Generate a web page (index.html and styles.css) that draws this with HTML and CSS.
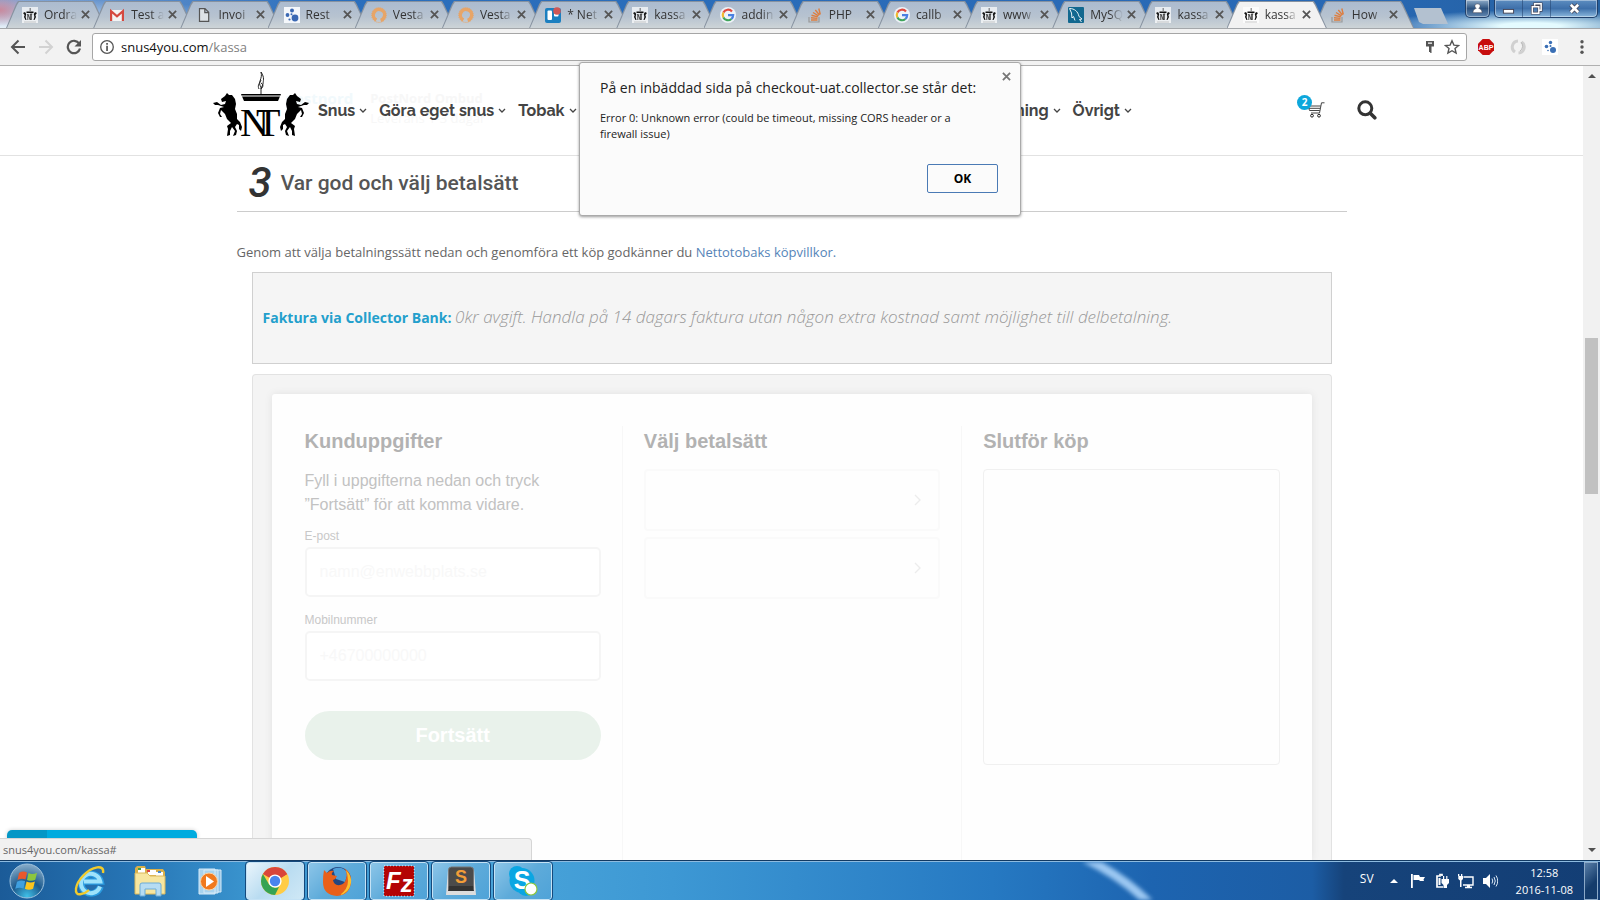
FILE: index.html
```html
<!DOCTYPE html>
<html lang="sv">
<head>
<meta charset="utf-8">
<title>kassa</title>
<link rel="stylesheet" href="styles.css">
</head>
<body>
<svg class="sprite" aria-hidden="true">
  <symbol id="horse" viewBox="0 0 30 44">
    <path d="M0 10 L4 9 L8 12 L12 11 L13 8 L9 9 L8 6 L12 3 L14 0 L16 2 L19 2 L22 6 L23 11 L22 16 L24 21 L24 26 L27 29 L29 34 L28 38 L26 36 L26 32 L24 31 L22 34 L24 38 L23 42 L20 43 L22 38 L19 34 L17 38 L17 42 L14 43 L15 36 L14 33 L18 30 L14 26 L12 21 L8 17 L7 21 L9 24 L7 24 L5 20 L7 15 L11 14 L5 12 L2 12 Z"/>
  </symbol>
  <symbol id="fav-nt" viewBox="0 0 16 16">
    <path fill="#fff" fill-opacity=".7" d="M0 0h16v16H0z"/>
    <path fill="#111" d="M4.500 4.500h7v1.400h-7zM7.800 1h.6v3h-.6zM1 6l2-1 1.200 2-.6 3 .9 3H3.500L2 10l.6-2zM15 6l-2-1-1.200 2 .6 3-.9 3h1l1.500-3-.6-2z"/>
    <path stroke="#222" stroke-width=".8" fill="none" d="M5.800 13V7l2.500 6V7h2M9.300 7v6"/>
    <path stroke="#aaa" stroke-width=".6" d="M2 15h12"/>
  </symbol>
  <symbol id="fav-gmail" viewBox="0 0 16 16">
    <path fill="#f4f4f4" d="M1 3h14v11H1z"/><path fill="none" stroke="#d5493f" stroke-width="2.200" d="M2.100 14V4.200L8 9.300l5.900-5.100V14"/>
  </symbol>
  <symbol id="fav-doc" viewBox="0 0 16 16">
    <path fill="#dde2e6" stroke="#555" stroke-width="1.200" d="M3.500 1.600h5.500l3.700 3.700v9.100H3.500zM8.800 1.800v3.800h3.700"/>
  </symbol>
  <symbol id="fav-rest" viewBox="0 0 16 16">
    <path fill="#f4f7fb" d="M0 0h16v16H0z"/><g fill="#3a68b3"><circle cx="8" cy="3.500" r="2"/><circle cx="3.500" cy="8" r="1.900"/><circle cx="11" cy="11" r="3.400"/><circle cx="5.500" cy="12.500" r="1.100"/><circle cx="7.500" cy="7.300" r="1"/></g>
  </symbol>
  <symbol id="fav-vesta" viewBox="0 0 16 16">
    <circle cx="8" cy="8" r="5.600" fill="none" stroke="#e7a568" stroke-width="3.400" stroke-dasharray="30 5.200" transform="rotate(118 8 8)"/><circle cx="8" cy="8" r="7.400" fill="none" stroke="#e7a568" stroke-dasharray="1 1"/>
  </symbol>
  <symbol id="fav-trello" viewBox="0 0 16 16">
    <rect y="1" width="16" height="15" rx="2" fill="#1b7fc0"/><rect x="2.500" y="3.500" width="4.500" height="9.500" rx="1" fill="#fff"/><rect x="9" y="3.500" width="4.500" height="6" rx="1" fill="#fff"/><circle cx="12" cy="4" r="3.800" fill="#cf5656"/>
  </symbol>
  <symbol id="fav-google" viewBox="0 0 16 16">
    <circle cx="8" cy="8" r="8" fill="#eef3f8"/><g fill="none" stroke-width="2.200"><path stroke="#e04a3f" d="M12 4.500A5.200 5.200 0 0 0 3.400 5.600"/><path stroke="#f0b92d" d="M3.400 5.600a5.200 5.200 0 0 0 0 4.800"/><path stroke="#3fa45b" d="M3.400 10.400a5.200 5.200 0 0 0 8 1.600"/><path stroke="#4a80e0" d="M11.400 12a5.200 5.200 0 0 0 1.800-3.900H8"/></g>
  </symbol>
  <symbol id="fav-stack" viewBox="0 0 16 16">
    <path fill="none" stroke="#999" stroke-width="1.200" d="M2 10v5h10v-5"/><path fill="none" stroke="#dd7d3f" stroke-width="1.400" d="M4 13h6.500M4 10.700l6.500.7M4.500 8.200l6.300 1.700M6 5.500l5.500 3.300M8.300 3l4.200 5M11.800 1.500l1.500 6"/>
  </symbol>
  <symbol id="fav-mysql" viewBox="0 0 16 16">
    <rect width="16" height="16" rx="1" fill="#12688f"/><path fill="none" stroke="#e8f3f7" stroke-width="1" d="M1.500 1.500c5 0 8.500 3 9.500 8l3 2.500-2.500.5 2 2.500M1.500 1.500l2 4.500.5 5 1.500-1.500 1.500 4"/>
  </symbol>
  <symbol id="x" viewBox="0 0 10 10"><path stroke="currentColor" stroke-width="2" d="M1 1l8 8M9 1L1 9"/></symbol>
  <symbol id="chev" viewBox="0 0 8 6"><path fill="none" stroke="currentColor" stroke-width="1.300" d="M1 1l3 3 3-3"/></symbol>
</svg>

<header class="titlebar">
  <nav class="tabs" aria-label="Flikar">
    <div class="tab"><svg class="fav"><use href="#fav-nt"/></svg><span class="tab-name">Ordra</span><button class="tab-x" aria-label="Stäng"><svg><use href="#x"/></svg></button></div>
    <div class="tab"><svg class="fav"><use href="#fav-gmail"/></svg><span class="tab-name">Test a</span><button class="tab-x" aria-label="Stäng"><svg><use href="#x"/></svg></button></div>
    <div class="tab"><svg class="fav"><use href="#fav-doc"/></svg><span class="tab-name">Invoi</span><button class="tab-x" aria-label="Stäng"><svg><use href="#x"/></svg></button></div>
    <div class="tab"><svg class="fav"><use href="#fav-rest"/></svg><span class="tab-name">Rest</span><button class="tab-x" aria-label="Stäng"><svg><use href="#x"/></svg></button></div>
    <div class="tab"><svg class="fav"><use href="#fav-vesta"/></svg><span class="tab-name">Vesta</span><button class="tab-x" aria-label="Stäng"><svg><use href="#x"/></svg></button></div>
    <div class="tab"><svg class="fav"><use href="#fav-vesta"/></svg><span class="tab-name">Vesta</span><button class="tab-x" aria-label="Stäng"><svg><use href="#x"/></svg></button></div>
    <div class="tab"><svg class="fav"><use href="#fav-trello"/></svg><span class="tab-name">* Net</span><button class="tab-x" aria-label="Stäng"><svg><use href="#x"/></svg></button></div>
    <div class="tab"><svg class="fav"><use href="#fav-nt"/></svg><span class="tab-name">kassa</span><button class="tab-x" aria-label="Stäng"><svg><use href="#x"/></svg></button></div>
    <div class="tab"><svg class="fav"><use href="#fav-google"/></svg><span class="tab-name">addin</span><button class="tab-x" aria-label="Stäng"><svg><use href="#x"/></svg></button></div>
    <div class="tab"><svg class="fav"><use href="#fav-stack"/></svg><span class="tab-name">PHP</span><button class="tab-x" aria-label="Stäng"><svg><use href="#x"/></svg></button></div>
    <div class="tab"><svg class="fav"><use href="#fav-google"/></svg><span class="tab-name">callb</span><button class="tab-x" aria-label="Stäng"><svg><use href="#x"/></svg></button></div>
    <div class="tab"><svg class="fav"><use href="#fav-nt"/></svg><span class="tab-name">www</span><button class="tab-x" aria-label="Stäng"><svg><use href="#x"/></svg></button></div>
    <div class="tab"><svg class="fav"><use href="#fav-mysql"/></svg><span class="tab-name">MySQ</span><button class="tab-x" aria-label="Stäng"><svg><use href="#x"/></svg></button></div>
    <div class="tab"><svg class="fav"><use href="#fav-nt"/></svg><span class="tab-name">kassa</span><button class="tab-x" aria-label="Stäng"><svg><use href="#x"/></svg></button></div>
    <div class="tab active"><svg class="fav"><use href="#fav-nt"/></svg><span class="tab-name">kassa</span><button class="tab-x" aria-label="Stäng"><svg><use href="#x"/></svg></button></div>
    <div class="tab"><svg class="fav"><use href="#fav-stack"/></svg><span class="tab-name">How</span><button class="tab-x" aria-label="Stäng"><svg><use href="#x"/></svg></button></div>
  </nav>
  <button class="new-tab" aria-label="Ny flik"></button>
  <button class="user-btn" aria-label="Användare"><svg viewBox="0 0 12 12"><path fill="#fff" stroke="#445" stroke-width=".6" d="M6 1a2.500 2.500 0 0 1 1.300 4.800C9 6.500 11 7.500 11 10.500H1C1 7.500 3 6.500 4.700 5.800A2.500 2.500 0 0 1 6 1z"/></svg></button>
  <div class="win-btns">
    <button aria-label="Minimera"><svg viewBox="0 0 14 14"><rect x="1.500" y="8" width="11" height="4" fill="#fff" stroke="#445"/></svg></button>
    <button aria-label="Återställ"><svg viewBox="0 0 14 14"><path fill="none" stroke="#445" stroke-width="3" d="M5 4V2h7v7h-2M2.500 5h7v7h-7z"/><path fill="none" stroke="#fff" stroke-width="1.600" d="M5 4V2h7v7h-2M2.500 5h7v7h-7z"/></svg></button>
    <button aria-label="Stäng fönster"><svg viewBox="0 0 14 14"><path stroke="#445" stroke-width="4.600" d="M3 3l8 8M11 3l-8 8"/><path stroke="#fff" stroke-width="2.800" d="M3 3l8 8M11 3l-8 8"/></svg></button>
  </div>
</header>

<div class="toolbar">
  <button aria-label="Tillbaka"><svg viewBox="0 0 16 16"><path fill="none" stroke="#555" stroke-width="2" d="M15 8H2.500M8.500 1.500L2 8l6.500 6.500"/></svg></button>
  <button aria-label="Framåt"><svg viewBox="0 0 16 16"><path fill="none" stroke="#d2d2d2" stroke-width="2" d="M1 8h12.500M7.500 1.500L14 8l-6.500 6.500"/></svg></button>
  <button aria-label="Ladda om"><svg viewBox="0 0 16 16"><path fill="none" stroke="#555" stroke-width="2.200" d="M13.200 4.600A6.200 6.200 0 1 0 14 9.500"/><path fill="#555" d="M15 1v6.500H8.500z"/></svg></button>
  <div class="omnibox">
    <svg class="info" viewBox="0 0 16 16"><circle cx="8" cy="8" r="6.300" fill="none" stroke="#555" stroke-width="1.300"/><path fill="#555" d="M7.200 4h1.700v1.700H7.200zM7.200 6.800h1.700V12H7.200z"/></svg>
    <div class="url" role="textbox" aria-label="Adress">snus4you.com<span>/kassa</span></div>
    <svg class="omni-icon" viewBox="0 0 16 16"><path fill="#555" fill-rule="evenodd" d="M4 2h8v5.500h-2.500V14H8.200v-1H7v-5.500H4zM6 3.500v1.300h4V3.500z"/></svg>
    <svg class="omni-icon" viewBox="0 0 16 16"><path fill="none" stroke="#555" stroke-width="1.400" d="M8 1.800l1.900 4.300 4.700.4-3.600 3 1.100 4.600L8 11.700l-4.100 2.400L5 9.500l-3.600-3 4.700-.4z"/></svg>
  </div>
  <div class="exts">
    <button aria-label="Adblock Plus"><svg viewBox="0 0 16 16"><path fill="#c70d0d" d="M4.700 0h6.600L16 4.700v6.600L11.300 16H4.700L0 11.300V4.700z"/><text x="8" y="10.700" text-anchor="middle" class="abp">ABP</text></svg></button>
    <button aria-label="Tillägg"><svg viewBox="0 0 16 16"><path fill="none" stroke="#d0d0d0" stroke-width="3" d="M8 2a6 6 0 0 0-3 11M8.500 14a6 6 0 0 0 3-11"/><path fill="none" stroke="#bbb" d="M11 3a6 6 0 0 1-1 9"/></svg></button>
    <button aria-label="Rest-klient"><svg viewBox="0 0 16 16"><path fill="#fff" d="M0 0h16v16H0z"/><g fill="#3a6fb5"><circle cx="8.500" cy="3.500" r="1.700"/><circle cx="4.500" cy="7.500" r="1.800"/><circle cx="11" cy="11" r="3"/><circle cx="6" cy="11.500" r=".8"/><circle cx="8.500" cy="7" r="1"/></g></svg></button>
    <button aria-label="Meny"><svg viewBox="0 0 16 16"><g fill="#555"><circle cx="8" cy="2.700" r="1.700"/><circle cx="8" cy="8" r="1.700"/><circle cx="8" cy="13.300" r="1.700"/></g></svg></button>
  </div>
</div>

<div class="viewport">
  <div class="page">
    <header class="site-head">
      <div class="ghost" aria-hidden="true"><b class="ghost-brand">postnord</b><span><b>PostNord Ombud</b><br>Leverans 1-3 dagar</span></div>
      <a class="logo" href="#" aria-label="NT"><svg viewBox="0 0 96 66">
        <use href="#horse" x="0" y="22" width="30" height="44"/>
        <use href="#horse" x="0" y="22" width="30" height="44" transform="matrix(-1 0 0 1 96 0)"/>
        <path d="M28 23h40l-3 7H31z"/><path stroke="#fff" d="M29 25h38"/>
        <path fill="none" stroke="#222" stroke-width="1" d="M48 23v-7c-4-5 2-8 0-15 4 6 2 9 2 12l-2 5M46 18c-2-4 1-6 2-9M48 12c3 2 2 4 0 6"/>
        <text x="27" y="65" class="monogram">N</text><text x="43" y="65" class="monogram">T</text>
      </svg></a>
      <nav class="menu" aria-label="Huvudmeny">
        <div class="menu-part"><a href="#">Snus<svg><use href="#chev"/></svg></a><a href="#">Göra eget snus<svg><use href="#chev"/></svg></a><a href="#">Tobak<svg><use href="#chev"/></svg></a></div>
        <div class="menu-part"><a href="#">ning<svg><use href="#chev"/></svg></a><a href="#">Övrigt<svg><use href="#chev"/></svg></a></div>
      </nav>
      <div class="head-tools">
        <a class="cart" href="#" aria-label="Varukorg"><svg viewBox="0 0 18 16"><path fill="none" stroke="#444" d="M17.500.8h-3L12.500 11H4M13.800 4H1l1.500 4.500h10.300M2 6.300h11"/><circle cx="5" cy="13.700" r="1.400" fill="none" stroke="#222"/><circle cx="12" cy="13.700" r="1.400" fill="none" stroke="#222"/></svg><span class="badge">2</span></a>
        <button class="search" aria-label="Sök"><svg viewBox="0 0 20 20"><circle cx="8.300" cy="8.300" r="6.500" fill="none" stroke="#333" stroke-width="3"/><path stroke="#333" stroke-width="3.600" stroke-linecap="round" d="M13.300 13.300l4.500 4.500"/></svg></button>
      </div>
    </header>

    <main class="content">
      <h2 class="step"><i>3</i><span>Var god och välj betalsätt</span></h2>
      <p class="terms">Genom att välja betalningssätt nedan och genomföra ett köp godkänner du <a href="#">Nettotobaks köpvillkor.</a></p>
      <div class="invoice"><b>Faktura via Collector Bank:</b> <i>0kr avgift. Handla på 14 dagars faktura utan någon extra kostnad samt möjlighet till delbetalning.</i></div>
      <section class="checkout">
        <div class="sheet">
          <form class="col">
            <h3>Kunduppgifter</h3>
            <p>Fyll i uppgifterna nedan och tryck ”Fortsätt” för att komma vidare.</p>
            <label for="mail">E-post</label>
            <input id="mail" type="email" placeholder="namn@enwebbplats.se">
            <label for="tel">Mobilnummer</label>
            <input id="tel" type="tel" placeholder="+46700000000">
            <button type="button" class="go">Fortsätt</button>
          </form>
          <div class="col">
            <h3>Välj betalsätt</h3>
            <button class="option" aria-label="Betalsätt 1"><svg viewBox="0 0 7 12"><path fill="none" stroke="#ececec" stroke-width="1.300" d="M1 1l5 5-5 5"/></svg></button>
            <button class="option" aria-label="Betalsätt 2"><svg viewBox="0 0 7 12"><path fill="none" stroke="#ececec" stroke-width="1.300" d="M1 1l5 5-5 5"/></svg></button>
          </div>
          <div class="col">
            <h3>Slutför köp</h3>
            <div class="finish"></div>
          </div>
        </div>
      </section>
    </main>
  </div>
  <div class="scrollbar"><i class="up"></i><i class="thumb"></i><i class="down"></i></div>
  <div class="chat"></div>
  <div class="status">snus4you.com/kassa#</div>
</div>

<div class="dialog" role="alertdialog" aria-labelledby="dlg-title">
  <button class="dialog-x" aria-label="Stäng dialog"><svg><use href="#x"/></svg></button>
  <h1 id="dlg-title">På en inbäddad sida på checkout-uat.collector.se står det:</h1>
  <p>Error 0: Unknown error (could be timeout, missing CORS header or a firewall issue)</p>
  <button class="ok">OK</button>
</div>

<footer class="taskbar">
  <svg class="beam" viewBox="0 0 110 38" aria-hidden="true"><path fill="none" stroke="#9cc8f2" stroke-width="9" d="M8-6Q52 14 82 46"/></svg>
  <button class="launch start" aria-label="Start"><svg viewBox="0 0 36 36">
    <defs><radialGradient id="orb" cx=".5" cy=".95" r=".9"><stop offset="0" stop-color="#3fc0e8"/><stop offset=".5" stop-color="#1c5a8d"/><stop offset="1" stop-color="#7fa6c5"/></radialGradient></defs>
    <circle cx="18" cy="18" r="17" fill="url(#orb)" stroke="#9fc3de"/>
    <path fill="#e8582c" d="M10 10q4-2.500 8-.5l-1.500 7q-4-1.600-8 .6z"/><path fill="#8cc63f" d="M19.500 10q4 2 8.500-.3l-1.700 7.100q-4 2-8.300.2z"/><path fill="#3fa0e0" d="M8 18.700q4-2.200 8.100-.6l-1.600 7.400q-4-1.800-8.200.2z"/><path fill="#fcc51e" d="M17.600 18.600q4 1.800 8.300-.1l-1.800 7.200q-4 2-8.200.1z"/></svg></button>
  <button class="launch" aria-label="Internet Explorer"><svg viewBox="0 0 32 32"><path fill="none" stroke="#2a9be0" stroke-width="6.500" d="M26.500 21.500A9.700 9.700 0 1 1 26.600 16.500H10"/><path fill="none" stroke="#9ee2fb" stroke-width="4" d="M26 21.500A9.700 9.700 0 1 1 26.300 16.500H10"/><path fill="none" stroke="#f2cb2c" stroke-width="2.400" d="M29 8C31-1 18 1 9 11 1 19-1 31 7 29c3-.5 6-2 8-4"/></svg></button>
  <button class="launch" aria-label="Utforskaren"><svg viewBox="0 0 32 32"><path fill="#d9b04a" d="M1 6V3l2-2h8l1 3h17l2 3v21H1z"/><path fill="#fff" d="M4 3h7v5H4zM14 5h8v5h-8zM22 7h7v4h-7z"/><path fill="#44a048" d="M4 3h3v2H4z"/><path fill="#d44" d="M13 5h3v2h-3z"/><path fill="#48c" d="M24 6h3v2h-3z"/><path fill="#f7e6a0" stroke="#dcb95c" d="M1 8h12l3 3h15v18H1z"/><path fill="#b6dcf3" stroke="#6cacd8" d="M6 31V20q0-2 2-2h17q2 0 2 2v11h-5v-7H11v7z"/></svg></button>
  <button class="launch" aria-label="Mediaspelaren"><svg viewBox="0 0 32 32"><path fill="#8fc1e4" stroke="#d7ebf8" d="M14 5h13v22H14z"/><path fill="#a9d3ee" stroke="#d7ebf8" d="M10 5h14v23H10zM5 4h16v25H5z"/><circle cx="15" cy="16.500" r="8.500" fill="#f0791e" stroke="#fbd3a5"/><path fill="#fff" d="M12 11l8 5.500-8 5.500z"/></svg></button>
  <button class="task current" aria-label="Chrome"><svg viewBox="0 0 32 32"><circle cx="16" cy="16" r="14" fill="#fc4"/><path fill="#d9453a" d="M16 16L3.900 9A14 14 0 0 1 28.200 9z"/><path fill="#35a353" d="M16 30A14 14 0 0 1 3.900 9l6.500 11z"/><path fill="#35a353" d="M10 19.500l6 3.500 4-1-4 8-5-3z"/><path fill="#d9453a" d="M16 9h12.200L22 13z"/><circle cx="16" cy="16" r="6.600" fill="#fff"/><circle cx="16" cy="16" r="5.200" fill="#4a84ee"/></svg></button>
  <button class="task" aria-label="Firefox"><svg viewBox="0 0 32 32"><circle cx="17" cy="15" r="13" fill="#25467f"/><path fill="#4f9fd8" d="M12 4q9-4 15 4l-3 9-9-3z"/><path fill="#e9601a" d="M3 5l3 3q3-3 7-2-3 2-2 4l5 1q-1 3-4 4 1 6 7 5 5-1 6-6 2-6-2-11 8 5 7 14-1 13-14 14Q2 30 2 17 2 10 3 5z"/><path fill="#fbc02d" d="M25 5q6 6 5 13-2 10-11 12 8-6 8-14 0-6-2-11z"/></svg></button>
  <button class="task" aria-label="FileZilla"><svg viewBox="0 0 32 32"><rect x="1" y="1" width="30" height="30" fill="#b00000" stroke="#fff" stroke-dasharray="1 2"/><rect x="1.500" y="1.500" width="29" height="29" fill="#b40404"/><text x="3" y="24" class="fz">F<tspan dy="3">z</tspan></text></svg></button>
  <button class="task" aria-label="Sublime Text"><svg viewBox="0 0 32 32"><path fill="#ddd" d="M3 4h26l2 26H1z"/><rect x="3.500" y="2" width="25" height="23" rx="3" fill="#4b4b4b" stroke="#777"/><path fill="#333" d="M4 21h24l1 5H3z"/><text x="16" y="18" text-anchor="middle" class="sub">S</text></svg></button>
  <button class="task" aria-label="Skype"><svg viewBox="0 0 32 32"><circle cx="10" cy="9" r="8" fill="#0aa6e2"/><circle cx="19" cy="22" r="9" fill="#0aa6e2"/><circle cx="15" cy="15.500" r="12.500" fill="#0aa6e2"/><text x="15" y="24" text-anchor="middle" class="sky">S</text><circle cx="24" cy="24" r="6" fill="#fff" stroke="#8cc63f" stroke-width="1.200"/></svg></button>
  <div class="tray">
    <span class="lang">SV</span>
    <svg viewBox="0 0 16 16"><path fill="#fff" d="M4 10l4-4 4 4z"/></svg>
    <svg viewBox="0 0 16 16"><path fill="#fff" d="M1 1h1.800v14H1zM3.500 2h5.500l1 2h5l-1.500 2.500L14 8h-4L9 7H3.500z"/></svg>
    <svg viewBox="0 0 16 16"><path fill="none" stroke="#fff" stroke-width="1.700" d="M8 3V1.500H6V3H3v11h6"/><path fill="#fff" d="M9 3h1.200v3h2V3h1.200v3H15v4l-2 2v3H9.500v-3L7.500 10V6H9zM4.500 5h2v7h-2z"/></svg>
    <svg viewBox="0 0 16 16"><path fill="none" stroke="#fff" stroke-width="1.400" d="M5.500 4H15v8H5M7 14.500h7"/><path fill="#fff" d="M0 1h1.300v2H3V1h1.300v2H5v3L3.500 7.500V14H2V7.500L.3 6V3H0zM9 12h3v2H9z"/></svg>
    <svg viewBox="0 0 16 16"><path fill="#fff" d="M1 5h3l4-4v14l-4-4H1z"/><path fill="none" stroke="#dce8f5" d="M10 5.500q1.500 2.500 0 5M12 4q2.500 4 0 8M14 2.500q3.500 5.500 0 11"/></svg>
    <div class="clock"><span>12:58</span><span>2016-11-08</span></div>
    <button class="show-desktop" aria-label="Visa skrivbordet"></button>
  </div>
</footer>
</body>
</html>
```

FILE: styles.css
```css
* { box-sizing: border-box; }
body {
  margin: 0;
  height: 100vh;
  display: flex;
  flex-direction: column;
  overflow: hidden;
  position: relative;
  background: #fff;
  font-family: "Open Sans", sans-serif;
}
button { border: 0; padding: 0; background: none; font: inherit; }
svg { display: block; flex: none; }
a { text-decoration: none; }
.sprite { position: absolute; width: 0; height: 0; }

/* window title bar */
.titlebar {
  display: flex;
  height: 28px;
  flex: none;
  padding: 0 2px 0 6px;
  background:
    radial-gradient(ellipse 30px 16px at 0 10px, #c9899d, transparent),
    radial-gradient(ellipse 150px 16px at 1530px 26px, #e4fbff 20%, transparent),
    radial-gradient(ellipse 300px 30px at 0 28px, #e6f0f8, transparent),
    linear-gradient(90deg, #7fa3d4, #2b6fbd 20%, #2868b4 85%, #24609f);
}
.tabs { flex: 1; min-width: 0; display: flex; padding-right: 13px; }
.tab {
  flex: 1 1 0;
  min-width: 0;
  margin-right: -13px;
  padding: 1px 16px 0 16px;
  display: flex;
  align-items: center;
  position: relative;
  isolation: isolate;
}
.tab::before, .tab::after {
  content: "";
  position: absolute;
  inset: 0;
  z-index: -1;
  background: #8792a0;
  clip-path: polygon(0 100%, 10px 4px, 12px 1px, calc(100% - 13px) 1px, calc(100% - 11px) 4px, 100% 100%);
}
.tab::after {
  background: linear-gradient(#aabacf, #b7c3d0 60%, #cdd4d7);
  clip-path: polygon(1px 100%, 11px 5px, 13px 2px, calc(100% - 14px) 2px, calc(100% - 12px) 5px, calc(100% - 1px) 100%);
}
.tab.active { z-index: 2; }
.tab.active::after { background: #f2f2f2; }
.fav { width: 16px; height: 16px; }
.tab-name {
  flex: 1;
  min-width: 0;
  margin: 0 4px 0 6px;
  overflow: hidden;
  white-space: nowrap;
  font-size: 12px;
  line-height: 20px;
  color: #333;
  mask-image: linear-gradient(90deg, #000 60%, transparent);
}
.tab-x { color: #555; }
.tab-x svg { width: 9px; height: 9px; }
.new-tab {
  flex: none;
  align-self: flex-start;
  width: 34px;
  height: 16px;
  margin: 8px 17px 0 0;
  background: #b3c1d0;
  clip-path: polygon(0 0, 27px 0, 34px 100%, 9px 100%, 5px 88%);
}
.user-btn, .win-btns {
  flex: none;
  display: flex;
  justify-content: center;
  align-items: center;
  height: 18px;
  border: 1px solid #20406b;
  border-top: 0;
  border-radius: 0 0 5px 5px;
  box-shadow: inset 0 0 0 1px #ffffff66;
}
.user-btn { width: 25px; margin-right: 4px; background: linear-gradient(#8facc9, #2c527f 50%, #6289b3); }
.user-btn svg { width: 11px; height: 11px; }
.win-btns { background: linear-gradient(#5d8dc0, #3e70aa 50%, #8bb8dd); }
.win-btns button { width: 28px; height: 17px; border-right: 1px solid #20406b88; display: flex; justify-content: center; align-items: center; }
.win-btns button:last-child { width: 46px; border: 0; }
.win-btns svg { width: 13px; height: 13px; }

/* browser toolbar */
.toolbar {
  flex: none;
  height: 38px;
  display: flex;
  align-items: center;
  gap: 12px;
  padding: 0 10px;
  background: #f2f2f2;
  border-top: 1px solid #a4a7aa;
  border-bottom: 1px solid #b0b0b0;
}
.toolbar button svg { width: 16px; height: 16px; }
.omnibox {
  flex: 1;
  height: 28px;
  margin: 0 -1px 0 -2px;
  padding: 0 6px;
  display: flex;
  align-items: center;
  gap: 6px;
  background: #fff;
  border: 1px solid #a6a6a6;
  border-radius: 3px;
}
.info { width: 16px; height: 16px; }
.omni-icon { width: 16px; height: 16px; }
.url { flex: 1; font-size: 13px; color: #111; }
.url span { color: #808080; }
.exts { display: flex; gap: 16px; }
.abp { font: bold 7px "Liberation Sans", sans-serif; fill: #fff; }

/* page viewport */
.viewport { flex: 1; min-height: 0; display: flex; position: relative; overflow: hidden; }
.page { flex: 1; min-width: 0; display: flex; flex-direction: column; background: #fff; }
.site-head {
  position: relative;
  flex: none;
  height: 90px;
  padding: 0 206px 0 213px;
  display: flex;
  align-items: center;
  border-bottom: 1px solid #e2e2e2;
}
.ghost {
  position: absolute;
  left: 285px;
  top: 22px;
  display: flex;
  gap: 17px;
  font-size: 13px;
  line-height: 20px;
  color: #f7f7f7;
}
.ghost-brand { font-size: 15px; color: #f1f9fc; }
.logo { position: relative; margin-bottom: 13px; }
.logo svg { width: 96px; height: 66px; }
.monogram { font: 40px "Liberation Serif", serif; }
.menu { position: relative; flex: 1; max-width: 814px; margin-left: 9px; display: flex; justify-content: space-between; }
.menu-part { display: flex; gap: 12px; }
.menu a { display: flex; align-items: center; gap: 4px; font: 700 16px/24px "Raleway", Lato, sans-serif; color: #444; }
.menu svg { width: 8px; height: 6px; }
.head-tools { display: flex; gap: 32px; margin-left: auto; margin-bottom: 2px; align-items: center; }
.cart { position: relative; padding-top: 1px; }
.cart svg { width: 18px; height: 16px; }
.badge {
  position: absolute;
  left: -10px;
  top: -6px;
  width: 15px;
  height: 15px;
  border-radius: 50%;
  background: #0da7dc;
  color: #fff;
  font-weight: 700;
  font-size: 10px;
  line-height: 15px;
  text-align: center;
}
.search svg { width: 20px; height: 20px; }

.content { flex: 1; min-height: 0; width: 100%; max-width: 1110px; margin: 0 auto; display: flex; flex-direction: column; }
.step {
  margin: 0 0 30px;
  height: 56px;
  padding: 0 0 1px 12px;
  display: flex;
  align-items: center;
  gap: 9px;
  border-bottom: 1px solid #ccc;
  font-family: Roboto, sans-serif;
  font-weight: 500;
  font-size: 21px;
  color: #555;
}
.step i { font-size: 42px; line-height: 48px; color: #333; }
.terms { margin: 0 0 10px; font-size: 13px; line-height: 20px; color: #666; }
.terms a { color: #5584b8; }
.invoice {
  flex: none;
  margin: 0 15px 10px;
  padding: 31px 10px 32px;
  border: 1px solid #d0d0d0;
  background: #f5f5f5;
  font-size: 14px;
  line-height: 26px;
  color: #999;
}
.invoice b { color: #239fcc; }
.invoice i { font-weight: 300; font-size: 17px; }
.checkout {
  flex: 1;
  min-height: 0;
  margin: 0 15px;
  padding: 19px 19px 0;
  display: flex;
  border: 1px solid #e2e2e2;
  border-bottom: 0;
  border-radius: 4px 4px 0 0;
  background: #f4f4f4;
}
.sheet {
  flex: 1;
  min-width: 0;
  padding: 32px 32px 0 33px;
  display: grid;
  grid-template-columns: repeat(3, minmax(0, 1fr));
  column-gap: 43px;
  background: #fefefe;
  border-radius: 3px 3px 0 0;
  box-shadow: 0 0 8px #00000014;
  font-family: "Liberation Sans", Arial, sans-serif;
}
.col { position: relative; display: flex; flex-direction: column; }
.col + .col::before { content: ""; position: absolute; left: -22px; top: 0; bottom: 0; border-left: 1px solid #f7f7f7; }
.col h3 { margin: 3px 0 16px; font-size: 20px; line-height: 24px; color: #b2b2b2; }
.col p { margin: 0 0 12px; font-size: 16px; line-height: 24px; color: #c2c2c2; }
.col label { font-size: 12px; line-height: 14px; margin-bottom: 4px; color: #c8c8c8; }
.col input {
  width: 100%;
  height: 50px;
  margin-bottom: 16px;
  padding: 0 13px;
  border: 2px solid #f5f5f5;
  border-radius: 5px;
  background: #fff;
  font: 16px "Liberation Sans", Arial, sans-serif;
}
.col input::placeholder { color: #f8f8f8; opacity: 1; }
.go { height: 49px; margin-top: 14px; border-radius: 25px; background: #e9f2eb; color: #fff; font-weight: 700; font-size: 20px; }
.option {
  height: 62px;
  margin-bottom: 6px;
  padding-right: 17px;
  display: flex;
  align-items: center;
  justify-content: flex-end;
  border: 2px solid #fafafa;
  border-radius: 4px;
}
.option svg { width: 7px; height: 12px; }
.finish { aspect-ratio: 1; border: 1px solid #f0f0f0; border-radius: 4px; }

.scrollbar { width: 17px; background: #f1f1f1; position: relative; }
.scrollbar i { position: absolute; }
.thumb { left: 2px; right: 2px; top: 272px; height: 156px; background: #c1c1c1; }
.up, .down { left: 5px; border: 4px solid transparent; }
.up { top: 4px; border-bottom-color: #505050; }
.down { bottom: 4px; border-top-color: #505050; }
.chat {
  position: absolute;
  left: 7px;
  bottom: 0;
  width: 190px;
  height: 30px;
  border-radius: 5px 5px 0 0;
  background: linear-gradient(90deg, #0497c6 40px, #00abdf 40px);
  box-shadow: 0 0 4px #0003;
}
.status {
  position: absolute;
  left: 0;
  bottom: 0;
  width: 532px;
  height: 22px;
  padding-left: 3px;
  border: 1px solid #d5d5d5;
  border-width: 1px 1px 0 0;
  border-radius: 0 4px 0 0;
  background: #f1f1f1;
  font-size: 11px;
  line-height: 22px;
  color: #666;
}

/* alert */
.dialog {
  position: absolute;
  left: 50%;
  top: 62px;
  width: 442px;
  height: 154px;
  margin-left: -221px;
  padding: 14px 20px;
  background: #fbfbfb;
  border: 1px solid #aaa;
  border-radius: 3px;
  box-shadow: 0 1px 3px #0006;
  z-index: 5;
  color: #222;
}
.dialog h1 { margin: 0 0 11px; font-weight: 400; font-size: 14px; line-height: 22px; white-space: nowrap; }
.dialog p { margin: 0; padding-right: 20px; font-size: 11px; line-height: 16px; }
.dialog-x { position: absolute; right: 9px; top: 9px; color: #777; }
.dialog-x svg { width: 9px; height: 9px; }
.ok { display: block; width: 71px; height: 29px; margin: 22px 2px 0 auto; border: 1px solid #4a7ab5; border-radius: 2px; font-weight: 700; font-size: 12px; }

/* taskbar */
.taskbar {
  position: relative;
  flex: none;
  height: 40px;
  display: flex;
  align-items: stretch;
  border-top: 1px solid #123a63;
  box-shadow: inset 0 1px 0 #8dbbe0;
  background: linear-gradient(90deg, #1b5b98 0, #2674b4 8%, #3b96d0 16%, #48a3d9 32%, #3d98d4 42%, #2679c2 62%, #1d64b0 72%, #1c5da5 82%, #16437a 84%, #133e75);
  overflow: hidden;
}
.beam { position: absolute; left: 67%; top: 1px; width: 110px; height: 38px; filter: blur(2px); }
.launch { width: 60px; display: flex; align-items: center; justify-content: center; }
.launch.start { width: 54px; margin-right: 6px; }
.launch.start svg { width: 36px; height: 36px; }
.launch svg, .task svg { width: 32px; height: 32px; }
.task {
  width: 58px;
  margin: 1px 4px 0 0;
  display: flex;
  align-items: center;
  justify-content: center;
  border: 1px solid #c4e2f5;
  border-radius: 3px;
  outline: 1px solid #14497c;
  background: linear-gradient(135deg, #8cc5e8, #5eabda 50%, #4fa3d8);
}
.launch + .task { margin-left: 6px; }
.task.current { background: linear-gradient(135deg, #eaf5fc, #b9dcf1 50%, #cfe8f6); }
.fz { font: italic bold 24px "Liberation Sans", sans-serif; fill: #fff; }
.sub { font: bold 18px "Liberation Sans", sans-serif; fill: #f29d38; }
.sky { font: bold 25px "Liberation Sans", sans-serif; fill: #fff; }
.tray { margin-left: auto; display: flex; align-items: center; gap: 8px; color: #fff; font-size: 12px; padding-right: 2px; }
.tray svg { width: 16px; height: 16px; }
.lang { margin: 0 4px 4px 0; }
.clock { display: flex; flex-direction: column; align-items: center; line-height: 17px; font-size: 11px; margin: 0 3px 0 10px; }
.show-desktop { align-self: stretch; width: 14px; margin-top: 1px; border: 1px solid #8ba9c8; background: linear-gradient(135deg, #5a7fa8, #143c6c 60%); }
```
